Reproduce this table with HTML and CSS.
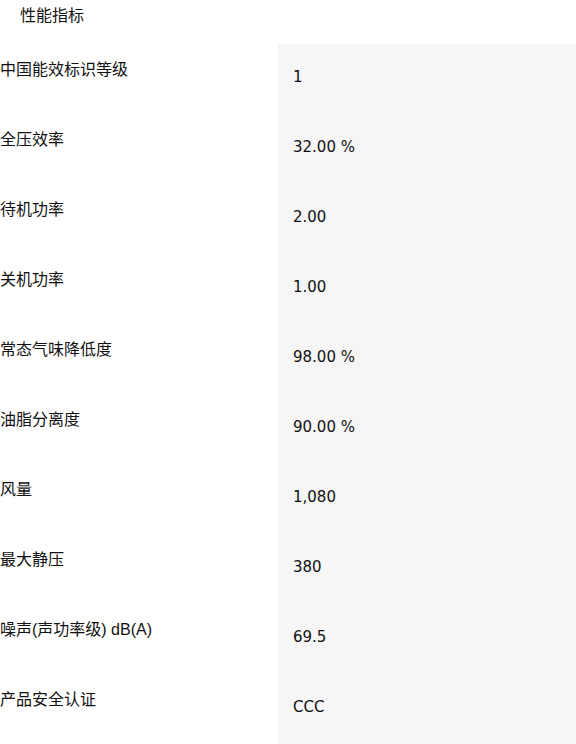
FILE: index.html
```html
<!DOCTYPE html>
<html lang="zh-CN">
<head>
<meta charset="utf-8">
<title>性能指标</title>
<link rel="stylesheet" href="styles.css">
</head>
<body>
<div class="spec">
  <div class="spec-title">性能指标</div>
  <div class="spec-table">
    <div class="label">中国能效标识等级</div><div class="value">1</div>
    <div class="label">全压效率</div><div class="value">32.00 %</div>
    <div class="label">待机功率</div><div class="value">2.00</div>
    <div class="label">关机功率</div><div class="value">1.00</div>
    <div class="label">常态气味降低度</div><div class="value">98.00 %</div>
    <div class="label">油脂分离度</div><div class="value">90.00 %</div>
    <div class="label">风量</div><div class="value">1,080</div>
    <div class="label">最大静压</div><div class="value">380</div>
    <div class="label">噪声(声功率级) dB(A)</div><div class="value">69.5</div>
    <div class="label">产品安全认证</div><div class="value">CCC</div>
  </div>
</div>
</body>
</html>
```

FILE: styles.css
```css
html, body {
  margin: 0;
  padding: 0;
  background: #fff;
}
body {
  font-family: "DejaVu Sans", Verdana, "Noto Sans CJK SC", sans-serif;
  font-size: 15px;
  color: #111;
}
.spec-title {
  height: 44px;
  box-sizing: border-box;
  padding: 4px 0 0 20px;
  font-family: "Noto Sans CJK SC", sans-serif;
  font-size: 16px;
  line-height: 20px;
}
.spec-table {
  display: grid;
  grid-template-columns: 278px 1fr;
  grid-auto-rows: 70px;
}
.label {
  box-sizing: border-box;
  padding-top: 16px;
  line-height: 20px;
  font-family: "Liberation Sans", Arial, "Noto Sans CJK SC", sans-serif;
  font-size: 16px;
}
.value {
  box-sizing: border-box;
  background: #f6f6f6;
  padding: 23px 0 0 15px;
  line-height: 20px;
}
```
